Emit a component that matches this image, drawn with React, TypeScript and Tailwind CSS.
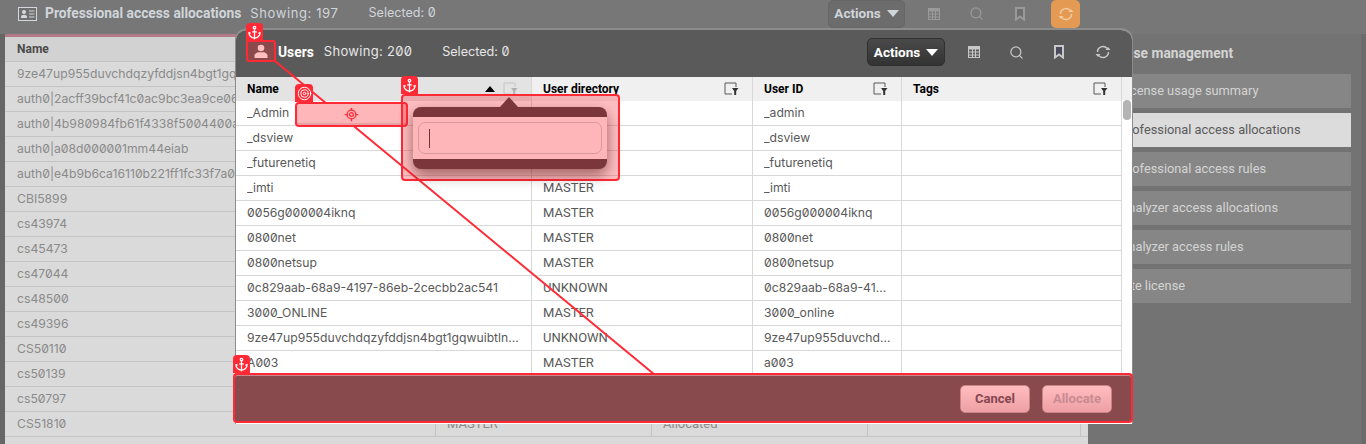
import { Anchor, LocateFixed, Search, Target } from 'lucide-react'

const backRows = [
  '9ze47up955duvchdqzyfddjsn4bgt1gqwuibtlnxkfp2',
  'auth0|2acff39bcf41c0ac9bc3ea9ce06f7a21d0',
  'auth0|4b980984fb61f4338f5004400ae21c77e',
  'auth0|a08d000001mm44eiab',
  'auth0|e4b9b6ca16110b221ff1fc33f7a0e9d2c',
  'CBI5899',
  'cs43974',
  'cs45473',
  'cs47044',
  'cs48500',
  'cs49396',
  'CS50110',
  'cs50139',
  'cs50797',
  'CS51810',
]

const users = [
  ['_Admin', 'MASTER', '_admin'],
  ['_dsview', 'MASTER', '_dsview'],
  ['_futurenetiq', 'MASTER', '_futurenetiq'],
  ['_imti', 'MASTER', '_imti'],
  ['0056g000004iknq', 'MASTER', '0056g000004iknq'],
  ['0800net', 'MASTER', '0800net'],
  ['0800netsup', 'MASTER', '0800netsup'],
  ['0c829aab-68a9-4197-86eb-2cecbb2ac541', 'UNKNOWN', '0c829aab-68a9-4197-86eb-2cecbb2ac541'],
  ['3000_ONLINE', 'MASTER', '3000_online'],
  ['9ze47up955duvchdqzyfddjsn4bgt1gqwuibtlnxkfp2', 'UNKNOWN', '9ze47up955duvchdqzyfddjsn4bgt1gqwuibtlnxkfp2'],
  ['A003', 'MASTER', 'a003'],
]

const menu = [
  'License usage summary',
  'Professional access allocations',
  'Professional access rules',
  'Analyzer access allocations',
  'Analyzer access rules',
  'Site license',
]

function TableIcon({ color }: { color: string }) {
  return (
    <svg width="14" height="14" viewBox="0 0 14 14" fill={color}>
      <path d="M1 1h12v12H1z M2 4.5v2h3v-2z M6 4.5v2h2v-2z M9 4.5v2h3v-2z M2 7.5v2h3v-2z M6 7.5v2h2v-2z M9 7.5v2h3v-2z M2 10.5v1.500h3v-1.500z M6 10.500v1.500h2v-1.500z M9 10.500v1.500h3v-1.500z" fillRule="evenodd" />
    </svg>
  )
}

function BookmarkIcon({ color, fill }: { color: string; fill: string }) {
  return (
    <svg width="12" height="14" viewBox="0 0 12 14" fill={fill} stroke={color} strokeWidth="2">
      <path d="M2 1h8v11.500L6 9.500l-4 3z" />
    </svg>
  )
}

function RefreshIcon({ color }: { color: string }) {
  return (
    <svg width="18" height="16" viewBox="0 0 18 16" fill="none" stroke={color} strokeWidth="1.500">
      <path d="M3.500 8a5.500 5.500 0 0 1 9.500-3.800" />
      <path d="M14.500 8a5.500 5.500 0 0 1-9.500 3.800" />
      <path d="M11.500 6h5l-2.500-3z" fill={color} stroke="none" />
      <path d="M6.500 10h-5l2.500 3z" fill={color} stroke="none" />
    </svg>
  )
}

function FilterIcon({ dim }: { dim?: boolean }) {
  const line = dim ? '#c4c4c4' : '#595959'
  const tip = dim ? '#b0b0b0' : '#333333'
  return (
    <svg width="15" height="14" viewBox="0 0 15 14" fill="none">
      <path d="M12 1H1v11h7" stroke={line} strokeWidth="1" />
      <path d="M12 1v4" stroke={line} strokeWidth="1" />
      <path d="M8 6h6.500l-2.300 3v4h-2V9z" fill={tip} />
    </svg>
  )
}

function UserIcon() {
  return (
    <svg width="14" height="15" viewBox="0 0 14 15" fill="#ffbfc1">
      <circle cx="7" cy="4" r="3.300" />
      <path d="M0.500 14v-2.500c0-1.800 2.500-3 4-3.200h5c1.500.2 4 1.400 4 3.200V14z" />
    </svg>
  )
}

function CardIcon() {
  return (
    <svg width="19" height="14" viewBox="0 0 19 14" fill="none">
      <rect x="0.500" y="0.500" width="18" height="13" fill="#6f6f6f" stroke="#d4d8dc" />
      <circle cx="6" cy="5" r="2" fill="#d4d8dc" />
      <path d="M3 11V9.500c0-1 1.500-1.700 3-1.700s3 .7 3 1.700V11z" fill="#d4d8dc" />
      <path d="M11 4h5.500M11 7h5.500M11 10h5.500" stroke="#d4d8dc" strokeWidth="1.200" />
    </svg>
  )
}

function Tab({ className, icon }: { className: string; icon: 'anchor' | 'target' }) {
  return (
    <div className={`absolute h-[18px] bg-[#ff2a35] rounded-t-[4px] flex items-center justify-center text-white ${className}`}>
      {icon === 'anchor' ? <Anchor size={15} strokeWidth={2} /> : <Target size={15} strokeWidth={1.600} />}
    </div>
  )
}

function HeaderCell({ label, sorted, active }: { label: string; sorted?: boolean; active?: boolean }) {
  return (
    <div className={`h-full flex items-center justify-between pl-[11px] pr-[13px] border-r border-[#d8d8d8] ${active ? 'bg-[#e3e3e3]' : 'bg-[#f0f0f0]'}`}>
      <span className="text-[12px] font-bold text-black">{label}</span>
      <span className="flex items-center gap-[8px]">
        {sorted && <span className="w-0 h-0 border-x-[5px] border-x-transparent border-b-[6px] border-b-black" />}
        <FilterIcon dim={sorted} />
      </span>
    </div>
  )
}

export default function App() {
  return (
    <div className="relative w-[1366px] h-[444px] overflow-hidden bg-[#737373] font-['Roboto',sans-serif]">
      {/* dimmed page behind the dialog */}
      <div className="h-[34px] pb-[7px] bg-[#777777] flex items-center pl-[18px] text-[#d0d5da]">
        <CardIcon />
        <span className="ml-[8px] text-[13.800px] font-bold">Professional access allocations</span>
        <span className="ml-[9px] text-[13px] tracking-[0.6px] font-['Inter',sans-serif] slashed-zero">Showing: 197</span>
        <span className="ml-[30px] text-[12.600px] font-['Inter',sans-serif] slashed-zero">Selected: 0</span>
        <div className="ml-auto mr-[286px] flex items-center">
          <div className="w-[77px] h-[28px] rounded-[5px] bg-[#6c6c6c] border border-[#666666] flex items-center justify-center gap-[6px] text-[13.500px] font-bold">
            Actions
            <span className="w-0 h-0 border-x-[6px] border-x-transparent border-t-[7px] border-t-[#d0d5da]" />
          </div>
          <div className="ml-[22px] w-[14px]"><TableIcon color="#9a9a9a" /></div>
          <div className="ml-[28px] text-[#9a9a9a]"><Search size={15} strokeWidth={2} /></div>
          <div className="ml-[30px]"><BookmarkIcon color="#9a9a9a" fill="#6f6f6f" /></div>
          <div className="ml-[25px] w-[29px] h-[28px] rounded-[5px] bg-[#e49a52] flex items-center justify-center"><RefreshIcon color="#f2c9a0" /></div>
        </div>
      </div>

      <div className="flex h-[410px]">
        <div className="w-[5px] bg-[#666666]" />
        <div className="w-[1083px] border-t-[3px] border-[#b37a8a] bg-[#dadada] text-[#8a8a8a] font-['Inter',sans-serif] text-[12.200px] slashed-zero">
          <div className="h-[25px] flex items-center pl-[12px] bg-[#d2d2d2] border-b border-[#c4c4c4] text-[12px] font-bold text-[#4a4a4a] font-['Roboto',sans-serif]">Name</div>
          {backRows.map((row) => (
            <div key={row} className="h-[25px] grid grid-cols-[430px_216px_216px_213px_8px] border-b border-[#c4c4c4]">
              <div className="flex items-center pl-[12px] pr-[8px] overflow-hidden whitespace-nowrap">{row}</div>
              <div className="flex items-center pl-[11px] border-l border-[#c4c4c4] font-['Roboto',sans-serif] text-[13px]">MASTER</div>
              <div className="flex items-center pl-[11px] border-l border-[#c4c4c4] font-['Roboto',sans-serif] text-[13px]">Allocated</div>
              <div className="border-l border-[#c4c4c4]" />
              <div className="border-l border-[#c4c4c4]" />
            </div>
          ))}
        </div>
        <div className="flex-1 flex">
          <div className="flex-1 pl-[12px] pr-[10px] pt-[11px] text-[#d4d4d4]">
            <div className="h-[16px] text-[13.800px] leading-[16px] font-bold">License management</div>
            <div className="mt-[13px] flex flex-col gap-[5px]">
              {menu.map((item) => (
                <div
                  key={item}
                  className={`h-[34px] flex items-center pl-[20px] text-[12.800px] ${item === 'Professional access allocations' ? 'bg-[#dcdcdc] text-[#5a5a5a]' : 'bg-[#868686]'}`}
                >
                  {item}
                </div>
              ))}
            </div>
          </div>
          <div className="w-[5px] bg-[#6b6b6b]" />
        </div>
      </div>

      {/* users dialog */}
      <div className="absolute left-[235px] top-[28px] w-[898px] h-[396px] rounded-t-[12px] border-x border-t-2 border-[#8c8c8c] bg-white overflow-hidden flex flex-col">
        <div className="h-[47px] pb-[3px] shrink-0 bg-[#5a5a5a] flex items-center pl-[42px] pr-[20px] text-[#e6e6e6]">
          <span className="text-[13.800px] font-bold text-white">Users</span>
          <span className="ml-[10px] text-[13px] tracking-[0.3px] font-['Inter',sans-serif] slashed-zero">Showing: 200</span>
          <span className="ml-[30px] text-[12.600px] font-['Inter',sans-serif] slashed-zero">Selected: 0</span>
          <div className="ml-auto flex items-center">
            <div className="w-[78px] h-[28px] rounded-[5px] bg-gradient-to-b from-[#4a4a4a] to-[#333333] border border-[#303030] flex items-center justify-center gap-[6px] text-[13.500px] font-bold text-white">
              Actions
              <span className="w-0 h-0 border-x-[6px] border-x-transparent border-t-[7px] border-t-white" />
            </div>
            <div className="ml-[22px]"><TableIcon color="#c8c8c8" /></div>
            <div className="ml-[28px] text-[#c8c8c8]"><Search size={15} strokeWidth={2} /></div>
            <div className="ml-[29px]"><BookmarkIcon color="#c8c8c8" fill="#4a4a5a" /></div>
            <div className="ml-[29px]"><RefreshIcon color="#c8c8c8" /></div>
          </div>
        </div>

        <div className="flex flex-1 min-h-0">
          <div className="w-[886px]">
            <div className="h-[24px] grid grid-cols-[296px_221px_149px_220px]">
              <HeaderCell label="Name" sorted active />
              <HeaderCell label="User directory" />
              <HeaderCell label="User ID" />
              <HeaderCell label="Tags" />
            </div>
            {users.map((u) => (
              <div key={u[0]} className="h-[25px] grid grid-cols-[296px_221px_149px_220px] border-b border-[#d8d8d8] text-[#595959] text-[12.200px] font-['Inter',sans-serif] slashed-zero">
                <div className="flex items-center pl-[11px] pr-[9px] border-r border-[#d8d8d8] min-w-0"><span className="truncate">{u[0]}</span></div>
                <div className="flex items-center pl-[11px] border-r border-[#d8d8d8] font-['Roboto',sans-serif] text-[13px]">{u[1]}</div>
                <div className="flex items-center pl-[11px] pr-[10px] border-r border-[#d8d8d8] min-w-0"><span className="truncate">{u[2]}</span></div>
                <div className="border-r border-[#d8d8d8]" />
              </div>
            ))}
          </div>
          <div className="relative flex-1 bg-white">
            <div className="absolute top-0 left-0 right-0 h-[23px] bg-[#f0f0f0]" />
            <div className="absolute top-[23px] left-[1px] w-[8px] h-[20px] rounded-[4px] bg-[#b4b4b4]" />
          </div>
        </div>
      </div>

      {/* red inspector overlays */}
      <svg className="absolute inset-0 pointer-events-none" width="1366" height="444">
        <line x1="275" y1="61" x2="655" y2="375" stroke="#ff2a35" strokeWidth="2" />
      </svg>

      <Tab icon="anchor" className="left-[246px] top-[23px] w-[17px]" />
      <div className="absolute left-[246px] top-[40px] w-[30px] h-[22px] rounded-[3px] border-2 border-[#ff2a35] bg-[#8a4a4c] flex items-center justify-center">
        <UserIcon />
      </div>

      <Tab icon="target" className="left-[295px] top-[84px] w-[18px]" />
      <div className="absolute left-[295px] top-[102px] w-[113px] h-[25px] rounded-[4px] border-2 border-[#ff2a35] bg-[#ffb6b9] shadow-[inset_0_-2px_0_#e8a0a4] flex items-center justify-center text-[#ff2a35]">
        <LocateFixed size={15} strokeWidth={2} />
      </div>

      <Tab icon="anchor" className="left-[401px] top-[76px] w-[17px]" />
      <div className="absolute left-[401px] top-[94px] w-[219px] h-[87px] rounded-[4px] border-2 border-[#ff2a35] bg-[#ff2a35]/30 pl-[10px] pr-[11px] pt-[11px]">
        <div className="absolute left-[97px] top-[1px] w-0 h-0 border-x-[9px] border-x-transparent border-b-[10px] border-b-[#7a363a]" />
        <div className="h-[62px] rounded-[8px] bg-[#7a363a] py-[10px] shadow-[0_6px_14px_rgba(80,20,20,0.55)]">
          <div className="h-[42px] bg-[#ffb6b9] p-[5px]">
            <div className="h-[32px] rounded-[7px] border border-[#d9989c] flex items-center pl-[10px]">
              <span className="w-px h-[19px] bg-[#6e3438]" />
            </div>
          </div>
        </div>
      </div>

      <Tab icon="anchor" className="left-[233px] top-[355px] w-[17px]" />
      <div className="absolute left-[233px] top-[373px] w-[900px] h-[50px] pt-[2px] rounded-[4px] border-2 border-[#ff2a35] bg-[#884a4c] shadow-[inset_0_1px_0_#c9888a] flex items-center justify-end gap-[12px] pr-[19px]">
        <div className="w-[70px] h-[28px] rounded-[5px] bg-gradient-to-b from-[#ffbcbf] to-[#eea0a4] border border-[#c98488] flex items-center justify-center text-[13px] font-bold text-[#85474f]">Cancel</div>
        <div className="w-[70px] h-[28px] rounded-[5px] bg-gradient-to-b from-[#ffbcbf] to-[#eea0a4] border border-[#c98488] flex items-center justify-center text-[13px] font-bold text-[#c98a90]">Allocate</div>
      </div>
    </div>
  )
}
